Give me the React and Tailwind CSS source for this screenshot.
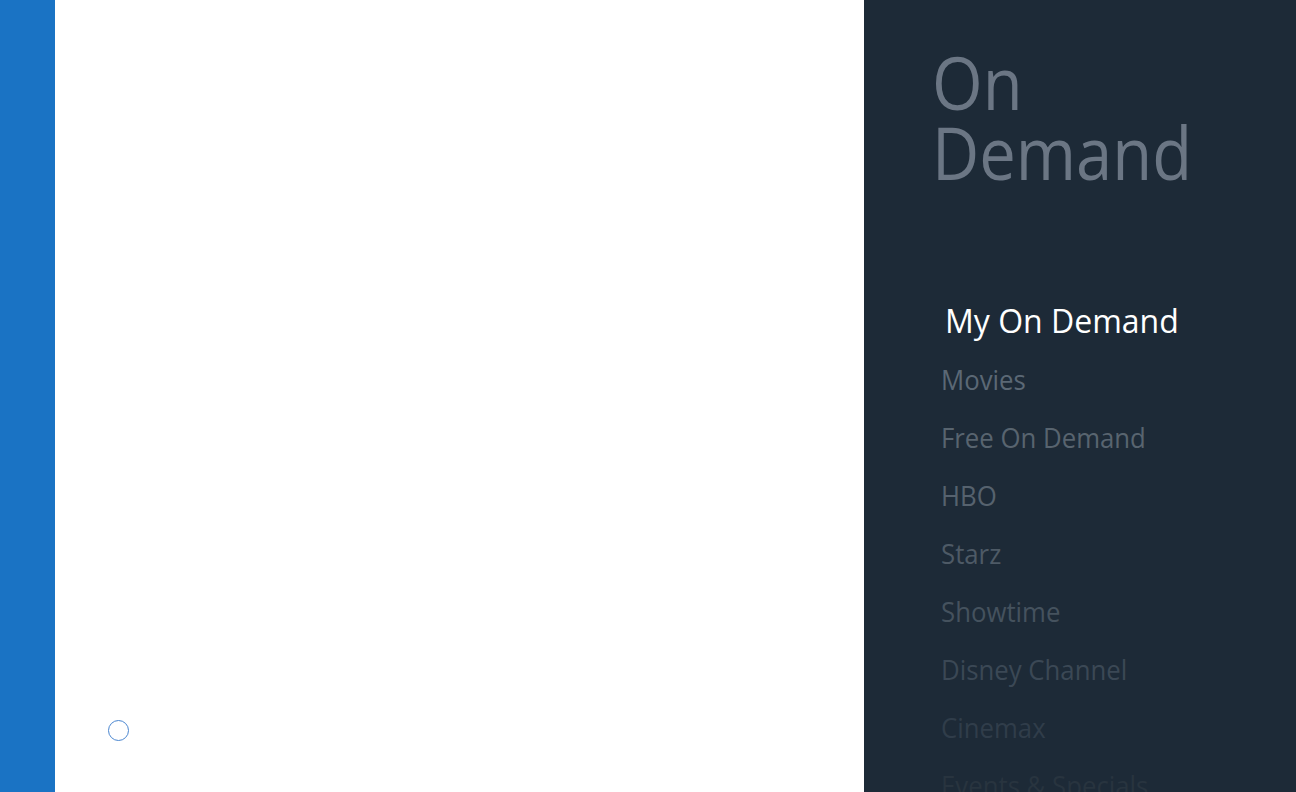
const menu = [
  { label: "Movies", color: "text-[#5b6875]" },
  { label: "Free On Demand", color: "text-[#58646f]" },
  { label: "HBO", color: "text-[#56626e]" },
  { label: "Starz", color: "text-[#4e5a66]" },
  { label: "Showtime", color: "text-[#45525e]" },
  { label: "Disney Channel", color: "text-[#3b4855]" },
  { label: "Cinemax", color: "text-[#303d4a]" },
  { label: "Events & Specials", color: "text-[#28343f]" },
]

function Spinner() {
  return (
    <div className="w-[21px] h-[21px] rounded-full border border-[#4a86d0]" />
  )
}

function OnDemandPanel() {
  return (
    <aside className="w-[432px] h-full bg-[#1d2a37] overflow-hidden font-['Open_Sans',sans-serif]">
      <h1 className="pl-[68px] pt-[47px] text-[74px] leading-[70px] text-[#6b7684]">
        <span className="inline-block origin-left scale-x-[0.88]">
          On
          <br />
          Demand
        </span>
      </h1>
      <ul className="mt-[105px]">
        <li className="pl-[81px] h-[58px] text-[32px] leading-[58px] text-white whitespace-nowrap">
          My On Demand
        </li>
        {menu.map((item) => (
          <li
            key={item.label}
            className={`pl-[77px] h-[58px] text-[28px] leading-[58px] whitespace-nowrap ${item.color}`}
          >
            <span className="inline-block origin-left scale-x-[0.92]">{item.label}</span>
          </li>
        ))}
      </ul>
    </aside>
  )
}

export default function App() {
  return (
    <div className="flex w-[1296px] h-[792px] overflow-hidden">
      <div className="w-[55px] h-full bg-[#1a73c4]" />
      <main className="flex-1 h-full bg-white flex flex-col justify-end pb-[51px] pl-[53px]">
        <Spinner />
      </main>
      <OnDemandPanel />
    </div>
  )
}
